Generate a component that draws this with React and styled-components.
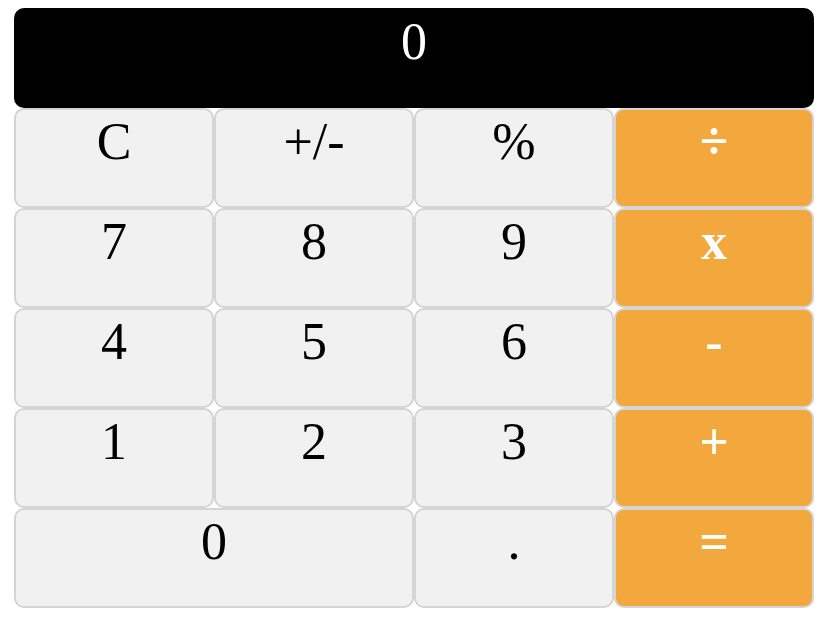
import React from "react";
import styled, { createGlobalStyle } from "styled-components";

const Global = createGlobalStyle`
  html, body { margin: 0; padding: 0; background: #fff; }
  body { font-family: "Liberation Serif", "Times New Roman", serif; }
  * { box-sizing: border-box; }
`;

const Calculator = styled.div`
  width: 800px;
  margin: 8px 0 0 14px;
  display: flex;
  flex-direction: column;
`;

const Display = styled.div`
  height: 100px;
  background: #000;
  color: #fff;
  border-radius: 10px;
  text-align: center;
  font-size: 52px;
  line-height: 60px;
  padding-top: 4px;
`;

const Keys = styled.div`
  display: grid;
  grid-template-columns: repeat(4, 200px);
  grid-auto-rows: 100px;
`;

const Key = styled.div`
  grid-column: span ${(p) => p.$span || 1};
  background: ${(p) => (p.$op ? "#f2a83c" : "#f1f1f1")};
  color: ${(p) => (p.$op ? "#fff" : "#000")};
  font-weight: ${(p) => (p.$op ? 700 : 400)};
  border: 2px solid #d4d4d4;
  border-radius: 10px;
  text-align: center;
  font-size: 52px;
  line-height: 60px;
  padding-top: 2px;
  user-select: none;
  cursor: pointer;
`;

const keys = [
  ["C"], ["+/-"], ["%"], ["÷", true],
  ["7"], ["8"], ["9"], ["x", true],
  ["4"], ["5"], ["6"], ["-", true],
  ["1"], ["2"], ["3"], ["+", true],
  ["0", false, 2], ["."], ["=", true],
];

export default function App() {
  return (
    <>
      <Global />
      <Calculator>
        <Display>0</Display>
        <Keys>
          {keys.map(([label, op, span]) => (
            <Key key={label} $op={op} $span={span}>
              {label}
            </Key>
          ))}
        </Keys>
      </Calculator>
    </>
  );
}
